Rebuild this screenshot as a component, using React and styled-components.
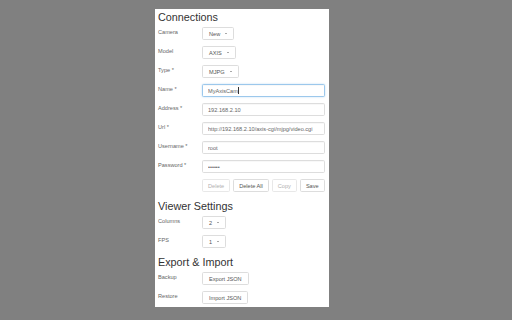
import React from 'react';
import styled, { createGlobalStyle } from 'styled-components';

const GlobalStyle = createGlobalStyle`
	html, body {
		margin: 0;
		background: #808080;
		font-family: "Liberation Sans", Arial, sans-serif;
	}
`;

function Select({ value }) {
	return (
		<SelectButton type="button">
			{value}
			<Caret />
		</SelectButton>
	);
}

function Field({ label, children }) {
	return (
		<Row>
			<Label>{label}</Label>
			<Control>{children}</Control>
		</Row>
	);
}

function App() {
	return (
		<Page>
			<GlobalStyle />
			<Panel>
				<Section>
					<Heading>Connections</Heading>
					<Fields>
						<Field label="Camera"><Select value="New" /></Field>
						<Field label="Model"><Select value="AXIS" /></Field>
						<Field label="Type *"><Select value="MJPG" /></Field>
						<Field label="Name *">
							<FocusWrap>
								<TextInput focused readOnly value="MyAxisCam" />
								<TextCursor />
							</FocusWrap>
						</Field>
						<Field label="Address *"><TextInput readOnly value="192.168.2.10" /></Field>
						<Field label="Url *">
							<TextInput readOnly value="http://192.168.2.10/axis-cgi/mjpg/video.cgi" />
						</Field>
						<Field label="Username *"><TextInput readOnly value="root" /></Field>
						<Field label="Password *"><TextInput type="password" readOnly value="123456" /></Field>
						<Field label="">
							<ButtonGroup>
								<Button compact disabled>Delete</Button>
								<Button compact>Delete All</Button>
								<Button compact disabled>Copy</Button>
								<Button compact>Save</Button>
							</ButtonGroup>
						</Field>
					</Fields>
				</Section>

				<Section>
					<Heading>Viewer Settings</Heading>
					<Fields>
						<Field label="Columns"><Select value="2" /></Field>
						<Field label="FPS"><Select value="1" /></Field>
					</Fields>
				</Section>

				<Section>
					<Heading>Export &amp; Import</Heading>
					<Fields>
						<Field label="Backup"><Button>Export JSON</Button></Field>
						<Field label="Restore"><Button>Import JSON</Button></Field>
					</Fields>
				</Section>
			</Panel>
		</Page>
	);
}

const Page = styled.div`
	padding: 9px 0 0 155px;
`;

const Panel = styled.div`
	width: 174px;
	box-sizing: border-box;
	background: #fff;
	padding: 2px 4px 3px 3px;
`;

const Section = styled.section`
	& + & {
		margin-top: 8px;
	}
`;

const Heading = styled.h2`
	margin: 0 0 4px;
	font-size: 10.8px;
	line-height: 12px;
	font-weight: 400;
	color: #333;
`;

const Fields = styled.div`
	display: flex;
	flex-direction: column;
	gap: 6px;
`;

const Row = styled.div`
	display: grid;
	grid-template-columns: 44px 1fr;
	align-items: start;
`;

const Label = styled.label`
	font-size: 5.6px;
	line-height: 8px;
	padding-top: 1px;
	color: #666;
	white-space: nowrap;
`;

const Control = styled.div`
	display: flex;
	min-width: 0;
`;

const boxBase = `
	height: 13px;
	box-sizing: border-box;
	border: 0.8px solid #ccc;
	border-radius: 1.6px;
	background: #fff;
	font-family: "Liberation Sans", Arial, sans-serif;
	font-size: 5.6px;
	margin: 0;
	white-space: nowrap;
`;

const SelectButton = styled.button`
	${boxBase}
	display: inline-flex;
	align-items: center;
	padding: 0 6px;
	color: #555;
	border-color: #ddd;
`;

const Caret = styled.span`
	display: inline-block;
	margin-left: 5px;
	width: 0;
	height: 0;
	border-top: 1.8px solid #555;
	border-left: 1.5px solid transparent;
	border-right: 1.5px solid transparent;
`;

const FocusWrap = styled.div`
	position: relative;
	flex: 1;
	display: flex;
`;

const TextInput = styled.input`
	${boxBase}
	flex: 1;
	width: 100%;
	min-width: 0;
	padding: 0 5px;
	color: #666;
	outline: none;
	border-color: ${(p) => (p.focused ? '#9cc8ec' : '#ddd')};
	box-shadow: ${(p) =>
		p.focused
			? 'inset 0 0.5px 0.5px rgba(0,0,0,.06), 0 0 2px rgba(102,175,233,.45)'
			: 'inset 0 0.5px 0.5px rgba(0,0,0,.06)'};
`;

const TextCursor = styled.span`
	position: absolute;
	left: 35.6px;
	top: 3px;
	width: 0.6px;
	height: 7px;
	background: #333;
`;

const ButtonGroup = styled.div`
	display: flex;
	gap: 3px;
`;

const Button = styled.button.withConfig({
	shouldForwardProp: (prop) => prop !== 'compact',
})`
	${boxBase}
	padding: ${(p) => (p.compact ? '0 5px' : '0 6px')};
	color: #555;
	border-color: #ddd;

	&:disabled {
		color: #b0b0b0;
		border-color: #e8e8e8;
	}
`;

export default App;
